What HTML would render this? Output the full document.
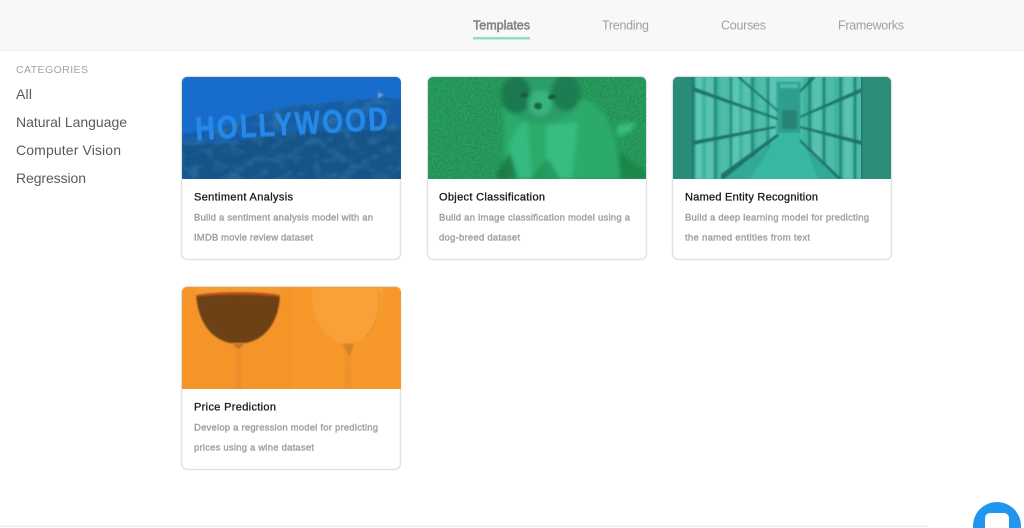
<!DOCTYPE html>
<html lang="en">
<head>
<meta charset="utf-8">
<title>Templates</title>
<style>
html,body{margin:0;padding:0;width:1024px;height:528px;overflow:hidden;background:#fff}
svg{display:block}
text{font-family:"Liberation Sans",sans-serif}
.t{font-size:11px;fill:#1b1b1b;stroke:#1b1b1b;stroke-width:.32px}
.d{font-size:9.5px;fill:#a0a0a4;stroke:#a0a0a4;stroke-width:.38px}
.n{font-size:12.5px;fill:#a0a0a0}
.s{font-size:14px;fill:#5a5a5a}
</style>
</head>
<body>
<svg xmlns="http://www.w3.org/2000/svg" width="1024" height="528" viewBox="0 0 1024 528">
<defs>
<clipPath id="c1"><path d="M182 179V82a5 5 0 0 1 5-5H396a5 5 0 0 1 5 5V179Z"/></clipPath>
<clipPath id="c2"><path d="M428 179V82a5 5 0 0 1 5-5H641a5 5 0 0 1 5 5V179Z"/></clipPath>
<clipPath id="c3"><path d="M673 179V82a5 5 0 0 1 5-5H886a5 5 0 0 1 5 5V179Z"/></clipPath>
<clipPath id="c4"><path d="M182 389V292a5 5 0 0 1 5-5H396a5 5 0 0 1 5 5V389Z"/></clipPath>
<clipPath id="hillclip"><path d="M182 134L205 131L225 126L245 118L262 112L282 108L300 104L325 103L345 100L370 99L385 97L401 100V179H182Z"/></clipPath>
<filter id="b1" x="-5%" y="-5%" width="110%" height="110%"><feGaussianBlur stdDeviation=".7"/></filter>
<filter id="b0" x="-5%" y="-10%" width="110%" height="120%"><feGaussianBlur stdDeviation=".4"/></filter>
<filter id="b2" x="-10%" y="-10%" width="120%" height="120%"><feGaussianBlur stdDeviation="2.2"/></filter>
<filter id="grain" x="0" y="0" width="100%" height="100%">
  <feTurbulence type="fractalNoise" baseFrequency=".5" numOctaves="2" seed="4"/>
  <feColorMatrix values="0 0 0 0 .03  0 0 0 0 .33  0 0 0 0 .15  2.6 0 0 0 -.8"/>
</filter>
<filter id="hillgrain" x="0" y="0" width="100%" height="100%">
  <feTurbulence type="fractalNoise" baseFrequency=".07 .11" numOctaves="3" seed="9"/>
  <feColorMatrix values="0 0 0 0 .05  0 0 0 0 .22  0 0 0 0 .38  2.4 0 0 0 -1"/>
  <feGaussianBlur stdDeviation=".8"/>
</filter>
<pattern id="booksL" width="37" height="40" patternUnits="userSpaceOnUse">
  <rect width="37" height="40" fill="#3db5a1"/>
  <rect x="3" width="7" height="40" fill="#58c2af"/>
  <rect x="11" width="3" height="40" fill="#2c8f80"/>
  <rect x="17" width="8" height="40" fill="#4fbca9"/>
  <rect x="27" width="2" height="40" fill="#2a8b7c"/>
  <rect x="30" width="6" height="40" fill="#5cc4b2"/>
</pattern>
<pattern id="booksR" width="31" height="40" patternUnits="userSpaceOnUse">
  <rect width="31" height="40" fill="#3db5a1"/>
  <rect x="2" width="3" height="40" fill="#2a8b7c"/>
  <rect x="7" width="8" height="40" fill="#58c2af"/>
  <rect x="17" width="2" height="40" fill="#26796d"/>
  <rect x="21" width="7" height="40" fill="#4fbca9"/>
</pattern>
</defs>

<!-- header -->
<rect width="1024" height="50" fill="#f8f8f8"/>
<rect y="50" width="1024" height="1" fill="#efefef"/>
<text x="473" y="29.500" class="n" textLength="57" style="fill:#808080;stroke:#808080;stroke-width:.5px">Templates</text>
<rect x="473" y="37" width="57" height="2.500" fill="#8fdccd"/>
<text x="602" y="29.500" class="n" textLength="47">Trending</text>
<text x="721" y="29.500" class="n" textLength="45">Courses</text>
<text x="838" y="29.500" class="n" textLength="66">Frameworks</text>

<!-- sidebar -->
<text x="16" y="73" font-size="10.500" fill="#a2a2a2" textLength="72">CATEGORIES</text>
<text x="16" y="99" class="s" textLength="16">All</text>
<text x="16" y="127" class="s" textLength="111">Natural Language</text>
<text x="16" y="155" class="s" textLength="105">Computer Vision</text>
<text x="16" y="183" class="s" textLength="70">Regression</text>

<!-- cards -->
<g fill="#fff" stroke="#e2e2e2" stroke-width="1.500">
<rect x="181.500" y="76.500" width="219" height="183" rx="6"/>
<rect x="427.500" y="76.500" width="219" height="183" rx="6"/>
<rect x="672.500" y="76.500" width="219" height="183" rx="6"/>
<rect x="181.500" y="286.500" width="219" height="183" rx="6"/>
</g>

<!-- Hollywood -->
<g clip-path="url(#c1)">
<rect x="182" y="77" width="219" height="102" fill="#186dcc"/>
<g filter="url(#b1)">
<path d="M182 134L205 131L225 126L245 118L262 112L282 108L300 104L325 103L345 100L370 99L385 97L401 100V179H182Z" fill="#155ca6"/>
<path d="M182 146L230 143L290 132L340 132L401 128V179H182Z" fill="#135288"/>
<rect x="182" y="95" width="219" height="84" filter="url(#hillgrain)" clip-path="url(#hillclip)" opacity=".55"/>
<path d="M378 92l6 3-6 3Z" fill="#6f9fd6"/>
</g>
<g transform="rotate(-3.100 197 140) translate(196 140) scale(.84 1)" filter="url(#b0)">
<text x="0" y="0" font-size="32" font-weight="700" fill="#2589e8" stroke="#2589e8" stroke-width=".6" textLength="229">HOLLYWOOD</text>
</g>
</g>

<!-- Dog -->
<g clip-path="url(#c2)">
<rect x="428" y="77" width="218" height="102" fill="#1b9449"/>
<rect x="428" y="77" width="218" height="102" filter="url(#grain)"/>
<g filter="url(#b2)">
<path d="M596 179L616 150L646 172V179Z" fill="#147a3b" opacity=".6"/>
<path d="M506 179C500 160 508 122 502 108L585 100C608 108 618 135 620 179Z" fill="#2aab69"/>
<path d="M617 125L635 122L631 132L617 136Z" fill="#38bd80"/>
<path d="M508 179C505 150 514 122 528 122L532 179Z" fill="#36ba7f"/>
<path d="M546 179V125L578 122L572 179Z" fill="#38bc80"/>
<path d="M498 172L510 152L518 179H496Z" fill="#156a38" opacity=".7"/>
<path d="M530 179L548 158L560 179Z" fill="#1d9153" opacity=".7"/>
<ellipse cx="541" cy="98" rx="36" ry="25" fill="#2a9e66"/>
<ellipse cx="516" cy="95" rx="15" ry="19" fill="#1d7850"/>
<ellipse cx="566" cy="93" rx="15" ry="18" fill="#1e7d52"/>
<ellipse cx="540" cy="103" rx="12" ry="13" fill="#38b47f"/>
</g>
<g filter="url(#b1)">
<ellipse cx="538" cy="106" rx="4" ry="3.500" fill="#1a6a44"/>
<ellipse cx="524" cy="95" rx="4" ry="2.500" fill="#165f3e"/>
<ellipse cx="552" cy="97" rx="4" ry="2.500" fill="#165f3e"/>
</g>
</g>

<!-- Library -->
<g clip-path="url(#c3)">
<rect x="673" y="77" width="218" height="102" fill="#32a997"/>
<path d="M693 77H777V140L722 179H693Z" fill="url(#booksL)" filter="url(#b1)"/>
<path d="M800 77H862V179H840L800 142Z" fill="url(#booksR)" filter="url(#b1)"/>
<g filter="url(#b1)">
<path d="M778 77H800V133H778Z" fill="#2f9f8e"/>
<path d="M776 77H802V82H776Z" fill="#4cc4b0"/>
<path d="M780 84H798V88H780Z" fill="#47bfaa"/>
<path d="M782 110H797V129H782Z" fill="#2a8475"/>
<path d="M780 133H800L818 179H750Z" fill="#38b8a3"/>
<path d="M693 87L778 118V120L693 91Z" fill="#1f7467"/>
<path d="M693 141L775 126L776 128L693 145Z" fill="#1f7467"/>
<path d="M721 174L777 134L779 136L724 179H721Z" fill="#1f7467"/>
<path d="M740 77L778 110L778 112L737 77Z" fill="#1f7467"/>
<path d="M862 88L800 116V118L862 92Z" fill="#1f7467"/>
<path d="M862 141L800 126V128L862 145Z" fill="#1f7467"/>
<path d="M842 179L800 139V142L838 179Z" fill="#1f7467"/>
<path d="M812 77L800 90V93L816 77Z" fill="#1f7467"/>
</g>
<rect x="673" y="77" width="20" height="102" fill="#2a8b78"/>
<rect x="862" y="77" width="29" height="102" fill="#2c8e7a"/>
<rect x="692" y="77" width="1.500" height="102" fill="#22796b"/>
<rect x="861" y="77" width="1.500" height="102" fill="#22796b"/>
</g>

<!-- Wine -->
<g clip-path="url(#c4)">
<rect x="182" y="287" width="111" height="102" fill="#f59529"/>
<rect x="293" y="287" width="108" height="102" fill="#f8982a"/>
<g filter="url(#b1)">
<path d="M195 287C194 315 207 343 238 344C268 343 282 315 281 287Z" fill="#f69a30"/>
<path d="M196 296C198 320 210 343 238 344C266 343 279 320 280 296C260 292 215 292 196 296Z" fill="#6e4113"/>
<path d="M196 295C215 291 260 291 280 295L280 297C260 294 215 294 196 297Z" fill="#b5501a"/>
<path d="M232 343L245 343L241 354L242 389H235L236 354Z" fill="#ec8f29"/>
<path d="M233 344H244L239 349Z" fill="#bb7220"/>
<path d="M312 287C311 312 322 342 347 344C372 342 384 312 383 287Z" fill="#f9a139"/>
<path d="M379 292C381 308 377 325 366 337" fill="none" stroke="#d98a2a" stroke-width="1"/>
<path d="M341 343H355L351 356L352 389H344L345 356Z" fill="#ef922b"/>
<path d="M343 344H354L349 356Z" fill="#cf8228"/>
</g>
</g>

<!-- card text -->
<text x="194" y="200.500" class="t" textLength="99">Sentiment Analysis</text>
<text x="194" y="220.500" class="d" textLength="179">Build a sentiment analysis model with an</text>
<text x="194" y="240.500" class="d" textLength="119">IMDB movie review dataset</text>

<text x="439" y="200.500" class="t" textLength="106">Object Classification</text>
<text x="439" y="220.500" class="d" textLength="191">Build an image classification model using a</text>
<text x="439" y="240.500" class="d" textLength="81">dog-breed dataset</text>

<text x="685" y="200.500" class="t" textLength="133">Named Entity Recognition</text>
<text x="685" y="220.500" class="d" textLength="184">Build a deep learning model for predicting</text>
<text x="685" y="240.500" class="d" textLength="125">the named entities from text</text>

<text x="194" y="410.500" class="t" textLength="82">Price Prediction</text>
<text x="194" y="430.500" class="d" textLength="184">Develop a regression model for predicting</text>
<text x="194" y="450.500" class="d" textLength="120">prices using a wine dataset</text>

<!-- footer -->
<rect y="525.500" width="928" height="1.500" fill="#ececec"/>
<circle cx="997" cy="526" r="24" fill="#2196f0"/>
<rect x="985" y="513" width="24" height="30" rx="5" fill="#fff"/>
</svg>
</body>
</html>
